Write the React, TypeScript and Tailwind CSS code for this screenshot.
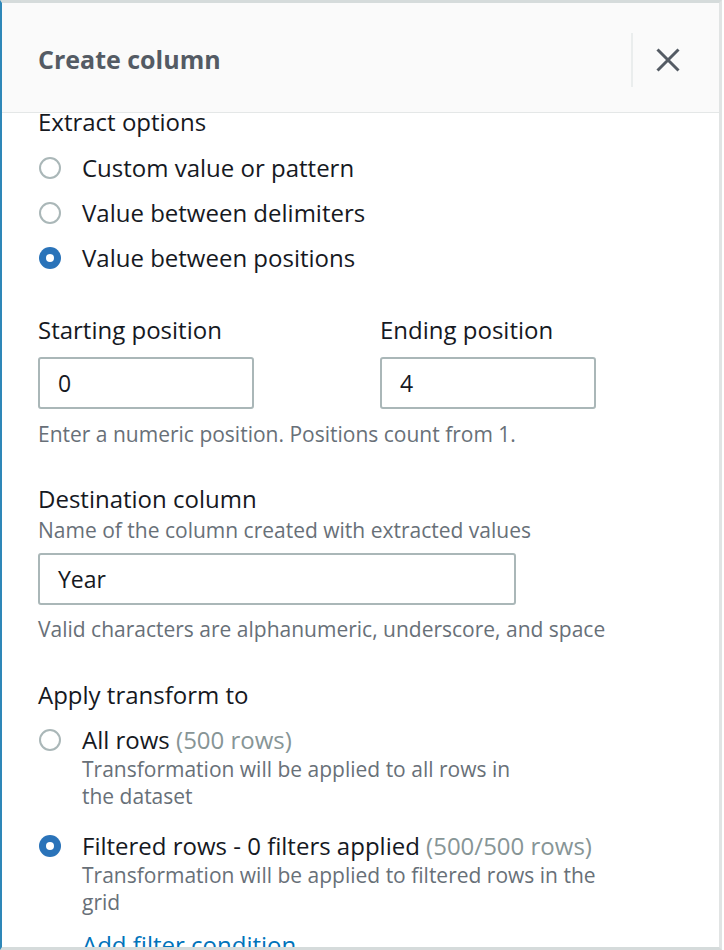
const font = { fontFamily: '"Open Sans", "Liberation Sans", sans-serif' };

function Radio({ checked }: { checked?: boolean }) {
  return checked ? (
    <div className="flex h-[22px] w-[22px] shrink-0 items-center justify-center rounded-full bg-[#2a73b9]">
      <div className="h-[8px] w-[8px] rounded-full bg-white" />
    </div>
  ) : (
    <div className="h-[22px] w-[22px] shrink-0 rounded-full border-2 border-[#aab7b8] bg-white" />
  );
}

export default function App() {
  return (
    <div
      className="flex h-[950px] w-[722px] flex-col overflow-hidden border-t-[3px] border-r-[3px] border-b-[3px] border-l-[2px] border-t-[#d5dbdb] border-r-[#e1e4e4] border-b-[#d5dbdb] border-l-[#2e87b8] bg-white text-[#16191f]"
      style={font}
    >
      <header className="flex h-[110px] shrink-0 items-center border-b border-[#e4e7e7] bg-[#fafafa] pl-[36px] pr-[16px] pt-[5px]">
        <h1 className="flex-1 text-[25px] font-bold text-[#545b64]">Create column</h1>
        <div className="h-[54px] w-[2px] bg-[#eaeded]" />
        <button className="flex w-[70px] items-center justify-center text-[#545b64]">
          <svg width="24" height="24" viewBox="0 0 24 24" fill="none" stroke="currentColor" strokeWidth="3">
            <path d="M1.5 1.5 22.5 22.5M22.5 1.5 1.5 22.5" />
          </svg>
        </button>
      </header>

      <div className="flex-1 overflow-hidden">
        <div className="-mt-[6px] pl-[36px] pr-6">
          <div className="text-[24px] leading-[30px]">Extract options</div>
          <div className="mt-[16px] flex flex-col gap-[15px]">
            {[
              ["Custom value or pattern", false],
              ["Value between delimiters", false],
              ["Value between positions", true],
            ].map(([label, checked]) => (
              <label key={label as string} className="flex items-center gap-[21px] pl-[1px]">
                <Radio checked={checked as boolean} />
                <span className="text-[24px] leading-[30px]">{label}</span>
              </label>
            ))}
          </div>

          <div className="mt-[42px] flex gap-[126px]">
            <div className="flex flex-col">
              <span className="text-[24px] leading-[30px]">Starting position</span>
              <div className="mt-[12px] flex h-[52px] w-[216px] items-center rounded-[3px] border-2 border-[#aab7b8] px-[18px] text-[23px]">
                0
              </div>
            </div>
            <div className="flex flex-col">
              <span className="text-[24px] leading-[30px]">Ending position</span>
              <div className="mt-[12px] flex h-[52px] w-[216px] items-center rounded-[3px] border-2 border-[#aab7b8] px-[18px] text-[23px]">
                4
              </div>
            </div>
          </div>
          <p className="mt-[11px] text-[21px] leading-[28px] text-[#687078]">
            Enter a numeric position. Positions count from 1.
          </p>

          <div className="mt-[36px] text-[24px] leading-[30px]">Destination column</div>
          <p className="mt-[2px] text-[21px] leading-[28px] text-[#687078]">
            Name of the column created with extracted values
          </p>
          <div className="mt-[9px] flex h-[52px] w-[478px] items-center rounded-[3px] border-2 border-[#aab7b8] px-[18px] text-[23px]">
            Year
          </div>
          <p className="mt-[10px] text-[21px] leading-[28px] text-[#687078]">
            Valid characters are alphanumeric, underscore, and space
          </p>

          <div className="mt-[37px] text-[24px] leading-[30px]">Apply transform to</div>
          <div className="mt-[15px] flex flex-col gap-[21px]">
            <label className="flex items-start gap-[21px] pl-[1px]">
              <div className="mt-[4px] shrink-0">
                <Radio />
              </div>
              <div>
                <div className="text-[24px] leading-[30px]">
                  All rows <span className="text-[#879596]">(500 rows)</span>
                </div>
                <p className="mt-[1px] max-w-[445px] text-[21px] leading-[27px] text-[#687078]">
                  Transformation will be applied to all rows in the dataset
                </p>
              </div>
            </label>
            <label className="flex items-start gap-[21px] pl-[1px]">
              <div className="mt-[4px] shrink-0">
                <Radio checked />
              </div>
              <div>
                <div className="text-[24px] leading-[30px]">
                  Filtered rows - 0 filters applied{" "}
                  <span className="text-[#879596]">(500/500 rows)</span>
                </div>
                <p className="mt-[1px] max-w-[530px] text-[21px] leading-[27px] text-[#687078]">
                  Transformation will be applied to filtered rows in the grid
                </p>
                <a className="mt-[14px] block text-[24px] leading-[30px] text-[#0073bb]">
                  Add filter condition
                </a>
              </div>
            </label>
          </div>
        </div>
      </div>
    </div>
  );
}
